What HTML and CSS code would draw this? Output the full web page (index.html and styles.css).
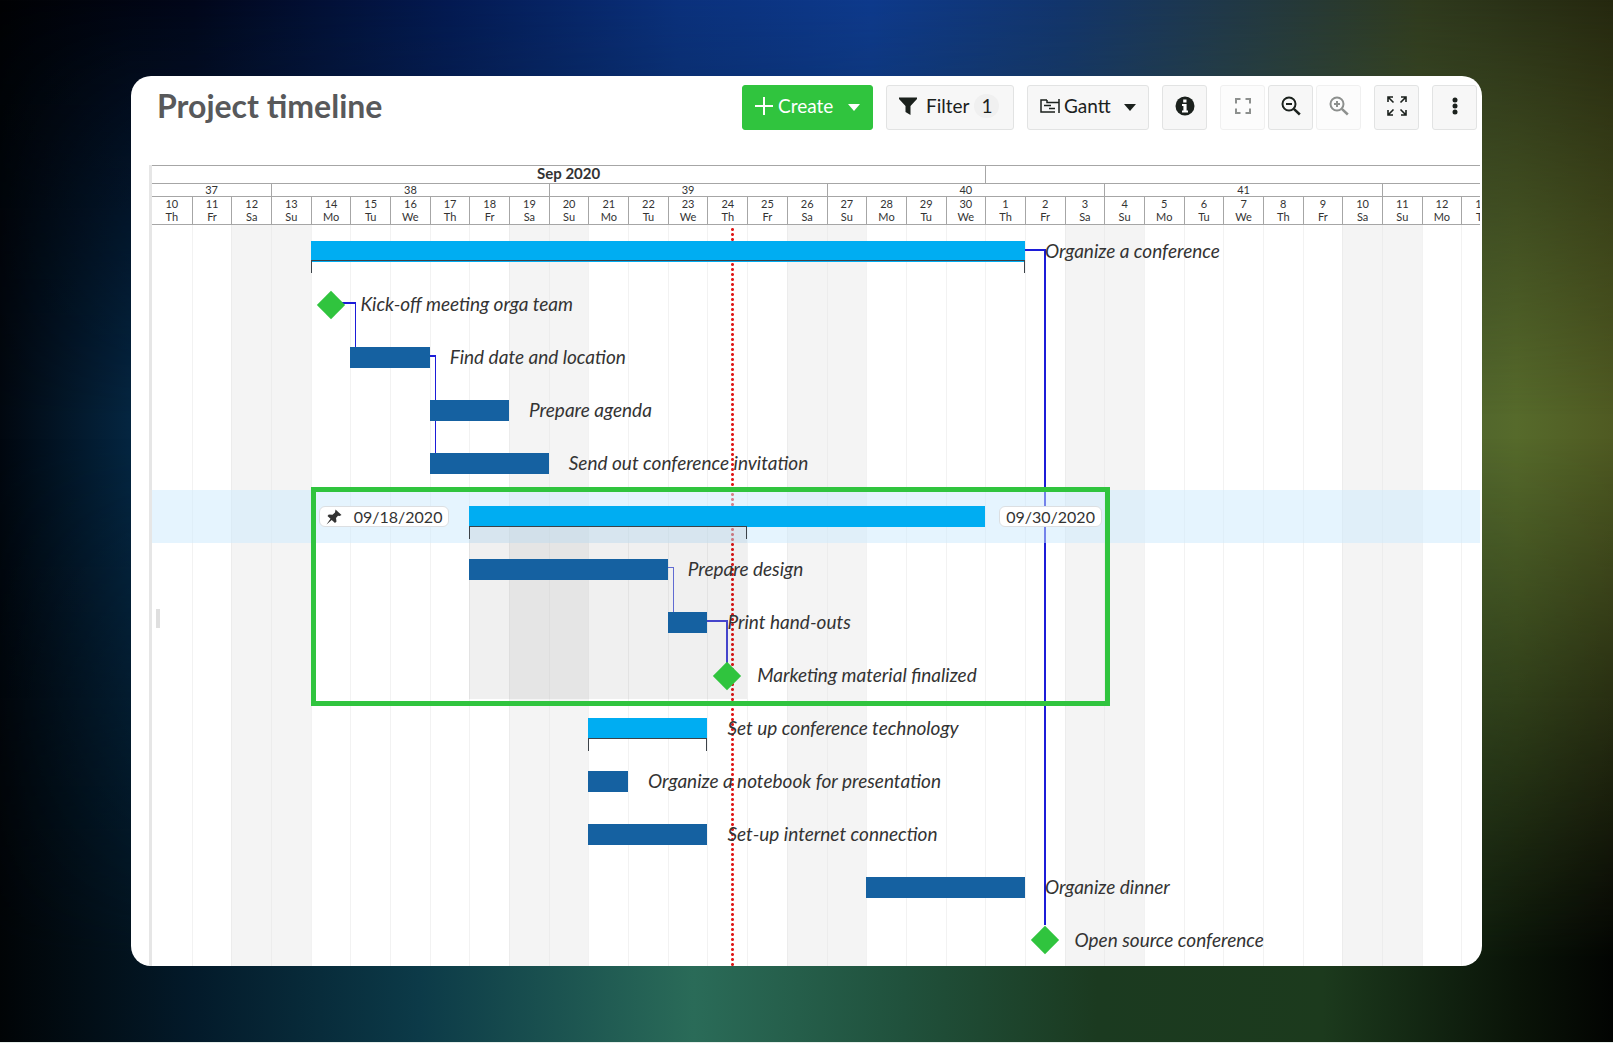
FILE: index.html
```html
<!DOCTYPE html>
<html lang="en">
<head>
<meta charset="utf-8">
<title>Project timeline</title>
<link rel="stylesheet" href="styles.css">
</head>
<body>
<main class="panel">
  <header class="toolbar">
    <h1 class="title">Project timeline</h1>
    <div class="actions">
      <button class="btn btn-create" type="button">
        <svg width="18" height="18" viewBox="0 0 18 18" fill="none" stroke="currentColor" stroke-width="2"><path d="M9 0v18M0 9h18"/></svg>
        <span>Create</span>
        <svg class="caret" width="12" height="7" viewBox="0 0 12 7" fill="currentColor"><path d="M0 0h12L6 7z"/></svg>
      </button>
      <button class="btn btn-filter" type="button">
        <svg width="18" height="18" viewBox="0 0 18 18" fill="currentColor"><path d="M0 0.500h18v1.500L11.500 9v9L6.500 15V9L0 2z"/></svg>
        <span>Filter</span>
        <span class="count">1</span>
      </button>
      <button class="btn btn-gantt" type="button">
        <svg width="20" height="14" viewBox="0 0 20 14" fill="none" stroke="currentColor" stroke-width="1.500"><path d="M7 1H1v12h14M19 0v14M7 1v2.500h12M4 6.500h7M9 9.500h6"/></svg>
        <span>Gantt</span>
        <svg class="caret" width="12" height="7" viewBox="0 0 12 7" fill="currentColor"><path d="M0 0h12L6 7z"/></svg>
      </button>
      <button class="btn btn-icon" type="button" aria-label="Details">
        <svg width="20" height="20" viewBox="0 0 20 20"><circle cx="10" cy="10" r="9.500" fill="#1b211d"/><path d="M8.200 3.500h3.300v3H8.200zM7 8h4.600v6.500H13v2H7v-2h1.400V10H7z" fill="#fff"/></svg>
      </button>
      <div class="group">
        <button class="btn btn-icon" type="button" aria-label="Zoom to fit" disabled>
          <svg width="16" height="16" viewBox="0 0 16 16" fill="none" stroke="currentColor" stroke-width="2"><path d="M1 5.500V1h4.500M10.500 1H15v4.500M15 10.500V15h-4.500M5.500 15H1v-4.500"/></svg>
        </button>
        <button class="btn btn-icon" type="button" aria-label="Zoom out">
          <svg width="20" height="20" viewBox="0 0 20 20" fill="none" stroke="currentColor" stroke-width="2"><circle cx="8" cy="8" r="6.500"/><path d="M5 8h6"/><path d="M12.800 12.800l6 5.700" stroke-width="2.500"/></svg>
        </button>
        <button class="btn btn-icon" type="button" aria-label="Zoom in" disabled>
          <svg width="20" height="20" viewBox="0 0 20 20" fill="none" stroke="currentColor" stroke-width="2"><circle cx="8" cy="8" r="6.500"/><path d="M5 8h6M8 5v6"/><path d="M12.800 12.800l6 5.700" stroke-width="2.500"/></svg>
        </button>
      </div>
      <button class="btn btn-icon" type="button" aria-label="Full screen">
        <svg width="20" height="20" viewBox="0 0 20 20" fill="none" stroke="currentColor" stroke-width="1.600"><path d="M1 6V1h5M1 1l5.500 5.500M14 1h5v5M19 1l-5.500 5.500M1 14v5h5M1 19l5.500-5.500M19 14v5h-5M19 19l-5.500-5.500"/></svg>
      </button>
      <button class="btn btn-icon" type="button" aria-label="More">
        <svg width="6" height="18" viewBox="0 0 6 18" fill="currentColor"><circle cx="3" cy="3" r="2.500"/><circle cx="3" cy="9" r="2.500"/><circle cx="3" cy="15" r="2.500"/></svg>
      </button>
    </div>
  </header>

  <section class="chart" aria-label="Gantt chart">
    <div class="timeline">
      <div class="scale months">
        <div style="grid-column: 1 / 22">Sep 2020</div><div style="grid-column: 22 / 35"></div>
      </div>
      <div class="scale weeks">
        <div style="grid-column: 1 / 4">37</div><div style="grid-column: 4 / 11">38</div><div style="grid-column: 11 / 18">39</div><div style="grid-column: 18 / 25">40</div><div style="grid-column: 25 / 32">41</div><div style="grid-column: 32 / 35"></div>
      </div>
      <div class="scale days">
        <div>10<br>Th</div><div>11<br>Fr</div><div>12<br>Sa</div><div>13<br>Su</div><div>14<br>Mo</div><div>15<br>Tu</div><div>16<br>We</div><div>17<br>Th</div><div>18<br>Fr</div><div>19<br>Sa</div><div>20<br>Su</div><div>21<br>Mo</div><div>22<br>Tu</div><div>23<br>We</div><div>24<br>Th</div><div>25<br>Fr</div><div>26<br>Sa</div><div>27<br>Su</div><div>28<br>Mo</div><div>29<br>Tu</div><div>30<br>We</div><div>1<br>Th</div><div>2<br>Fr</div><div>3<br>Sa</div><div>4<br>Su</div><div>5<br>Mo</div><div>6<br>Tu</div><div>7<br>We</div><div>8<br>Th</div><div>9<br>Fr</div><div>10<br>Sa</div><div>11<br>Su</div><div>12<br>Mo</div><div>13<br>Tu</div>
      </div>

      <div class="plot">
        <div class="columns">
          <i></i><i></i><i></i><i></i><i></i><i></i><i></i><i></i><i></i><i></i><i></i><i></i><i></i><i></i><i></i><i></i><i></i><i></i><i></i><i></i><i></i><i></i><i></i><i></i><i></i><i></i><i></i><i></i><i></i><i></i><i></i><i></i><i></i><i></i>
        </div>

        <div class="today" style="grid-column: 15"></div>

        <div class="link link-long" style="grid-row: 1 / 15; grid-column: 23"></div>
        <div class="link link-start" style="grid-row: 2 / 4; grid-column: 6"></div>
        <div class="link link-double" style="grid-row: 3 / 6; grid-column: 8"></div>
        <div class="link link-soft" style="grid-row: 7 / 9; grid-column: 14"></div>
        <div class="link link-half" style="grid-row: 8 / 10; grid-column: 15"></div>

        <div class="band" style="grid-row: 6"></div>
        <div class="span" style="grid-row: 6 / 10; grid-column: 9 / 16"></div>

        <div class="bar parent" style="grid-row: 1; grid-column: 5 / 23"></div>
        <div class="bracket inset" style="grid-row: 1; grid-column: 5 / 23"></div>
        <div class="label" style="grid-row: 1; grid-column: 23">Organize a conference</div>

        <div class="milestone" style="grid-row: 2; grid-column: 5"></div>
        <div class="label after-milestone" style="grid-row: 2; grid-column: 6">Kick-off meeting orga team</div>

        <div class="bar" style="grid-row: 3; grid-column: 6 / 8"></div>
        <div class="label" style="grid-row: 3; grid-column: 8">Find date and location</div>

        <div class="bar" style="grid-row: 4; grid-column: 8 / 10"></div>
        <div class="label" style="grid-row: 4; grid-column: 10">Prepare agenda</div>

        <div class="bar" style="grid-row: 5; grid-column: 8 / 11"></div>
        <div class="label" style="grid-row: 5; grid-column: 11">Send out conference invitation</div>

        <div class="date date-start" style="grid-row: 6; grid-column: 1 / 9">
          <svg width="16" height="16" viewBox="0 0 16 16" fill="currentColor"><path d="M9.500 0.500l6 5.500-2 1-1.500-.3-2 2.300.5 3.500-1.500 1.500-3.300-3L0.500 15.500 4.500 9.800 1.500 7l1.300-1.500 3.700.3L9 3.500z"/></svg>
          <span>09/18/2020</span>
        </div>
        <div class="bar parent" style="grid-row: 6; grid-column: 9 / 22"></div>
        <div class="bracket" style="grid-row: 6; grid-column: 9 / 16"></div>
        <div class="date date-end" style="grid-row: 6; grid-column: 22 / 26"><span>09/30/2020</span></div>

        <div class="bar" style="grid-row: 7; grid-column: 9 / 14"></div>
        <div class="label" style="grid-row: 7; grid-column: 14">Prepare design</div>

        <div class="bar" style="grid-row: 8; grid-column: 14 / 15"></div>
        <div class="label" style="grid-row: 8; grid-column: 15">Print hand-outs</div>

        <div class="milestone" style="grid-row: 9; grid-column: 15"></div>
        <div class="label after-milestone" style="grid-row: 9; grid-column: 16">Marketing material finalized</div>

        <div class="bar parent" style="grid-row: 10; grid-column: 12 / 15"></div>
        <div class="bracket" style="grid-row: 10; grid-column: 12 / 15"></div>
        <div class="label" style="grid-row: 10; grid-column: 15">Set up conference technology</div>

        <div class="bar" style="grid-row: 11; grid-column: 12 / 13"></div>
        <div class="label" style="grid-row: 11; grid-column: 13">Organize a notebook for presentation</div>

        <div class="bar" style="grid-row: 12; grid-column: 12 / 15"></div>
        <div class="label" style="grid-row: 12; grid-column: 15">Set-up internet connection</div>

        <div class="bar" style="grid-row: 13; grid-column: 19 / 23"></div>
        <div class="label" style="grid-row: 13; grid-column: 23">Organize dinner</div>

        <div class="milestone" style="grid-row: 14; grid-column: 23"></div>
        <div class="label after-milestone" style="grid-row: 14; grid-column: 24">Open source conference</div>

        <div class="frame" style="grid-row: 6 / 10; grid-column: 5 / 25"></div>
        <div class="handle"></div>
      </div>
    </div>
  </section>
</main>
</body>
</html>
```
FILE: styles.css
```css
* { box-sizing: border-box; }

:root {
  --green: #30c43e;
  --sky: #00adf2;
  --blue: #1561a1;
  --link: #1c1cd8;
  --line: #a6a6a6;
}

body {
  position: relative;
  z-index: 0;
  margin: 0;
  padding: 76px 131px;
  border-bottom: 1px solid #e6eeea;
  font-family: Lato, "Liberation Sans", sans-serif;
  color: #333;
  background: linear-gradient(90deg, #010204 0%, #02071a 12%, #041a52 28%, #0b317c 42%, #0e3a8c 54%, #12356c 66%, #203848 76%, #2f3a1e 88%, #25280f 100%) #01040a;
}

/* Two more colour bands fade in down the page: the sides, then the bottom edge. */
body::before,
body::after {
  content: "";
  position: absolute;
  inset: 0;
  z-index: -1;
}
body::before {
  background: linear-gradient(90deg, #01070f 0%, #042540 8%, #06284a 50%, #566a2b 94%, #4f5a22 100%);
  mask-image: linear-gradient(transparent 0%, #000 40%);
}
body::after {
  background: linear-gradient(90deg, #010406 0%, #031a2a 12%, #0c3a48 26%, #2a6b58 43%, #20513c 56%, #1b3a20 68%, #1c3a1d 82%, #0a1408 94%, #020402 100%);
  mask-image: linear-gradient(transparent 42%, #000 92%);
}

.panel {
  overflow: hidden;
  border-radius: 20px;
  background: #fff;
}

.toolbar {
  display: flex;
  justify-content: space-between;
  align-items: flex-start;
  padding: 9px 5px 35px 26px;
}

.title {
  margin: 0;
  font-size: 32px;
  line-height: 42px;
  font-weight: 700;
  color: #58595b;
}

.actions { display: flex; gap: 13px; }
.group { display: flex; gap: 3px; }

.btn {
  display: flex;
  align-items: center;
  height: 45px;
  padding: 0 12px 3px;
  border: 1px solid #e2e3e3;
  border-radius: 3px;
  background: #f7f7f7;
  color: #1b211d;
  font: 19px/24px Lato, "Liberation Sans", sans-serif;
  white-space: nowrap;
}
.btn-icon { justify-content: center; width: 45px; padding: 0 0 3px; }
.btn:disabled { background: #fcfcfc; border-color: #f0f0f0; color: #8d908e; }
.btn-create { gap: 5px; width: 131px; border-color: var(--green); background: var(--green); color: #fff; }
.btn-filter { gap: 9px; width: 128px; }
.btn-gantt { gap: 4px; width: 122px; }
.caret { margin: 2px 0 0 auto; }
.count {
  width: 25px;
  margin-left: -4px;
  border-radius: 12px;
  background: #f0f0f0;
  text-align: center;
}

.chart {
  overflow: hidden;
  margin: 0 2px 0 18px;
  border-left: 3px solid #e6e6e6;
}
/* The last day column runs past the right edge of the panel. */
.timeline { width: calc(100% + 21px); border-top: 1px solid var(--line); }

.scale,
.columns {
  display: grid;
  grid-template-columns: repeat(34, minmax(0, 1fr));
}
.scale {
  border-bottom: 1px solid var(--line);
  font-size: 11px;
  text-align: center;
}
.scale > div { border-left: 1px solid var(--line); }
.scale > div:first-child { border-left: 0; }
.months { height: 18px; font-size: 15px; line-height: 15px; font-weight: 700; }
.weeks { height: 13px; line-height: 11px; }
.days { height: 28px; line-height: 13px; }

.plot {
  display: grid;
  grid-template-columns: repeat(34, minmax(0, 1fr));
  grid-template-rows: repeat(13, 53px) 52px;
}
.columns { grid-area: 1 / 1 / -1 / -1; }
.columns i { border-left: 1px solid #f2f2f2; }
.columns i:first-child { border-left: 0; }
.columns i:nth-child(7n + 3),
.columns i:nth-child(7n + 4) { background: #f4f4f4; border-color: #ececec; }

.today {
  grid-row: 1 / -1;
  width: 3px;
  margin: 2px 0 0 24px;
  background: radial-gradient(circle at 50% 50%, #e01b1b 1px, transparent 2px) 0 0 / 3px 5px;
}

.link {
  width: 6px;
  height: 45px;
  margin-top: 24px;
  border: solid var(--link);
  border-width: 2px 1px 0 0;
}
.link-long { width: calc(50% + 1px); height: 676px; border-width: 2px 2px 0 0; }
.link-start { width: 16px; margin-left: -10px; }
.link-double { height: 98px; }
.link-soft { border-color: #6672e0; border-top-width: 1px; }
.link-half { width: calc(50% + 1px); border-width: 2px 2px 0 0; border-color: #4a4ad8; }

.band { grid-column: 1 / -1; background: rgba(204, 233, 253, 0.5); }
.span { margin: 37px 0 3px; background: rgba(0, 0, 0, 0.06); }

.bar { height: 21px; margin-top: 16px; background: var(--blue); }
.parent { background: var(--sky); }
.bracket { height: 13px; margin-top: 36px; border: 1px solid #3c4248; border-bottom: 0; }
.inset { margin-top: 35px; }

.milestone {
  place-self: center;
  width: 20px;
  height: 20px;
  background: var(--green);
  transform: rotate(45deg);
}

.label {
  padding-left: 20px;
  font-size: 19px;
  line-height: 51px;
  font-style: italic;
  white-space: nowrap;
}
.after-milestone { padding-left: 10px; }

.date {
  display: flex;
  align-items: center;
  height: 21px;
  margin-top: 16px;
  padding: 0 6px;
  border: 1px solid #dcdfe2;
  border-radius: 6px;
  background: #fff;
  font-size: 16px;
}
.date-start { justify-self: end; gap: 12px; margin-right: 20px; }
.date-end { justify-self: start; margin-left: 14px; }

.frame { margin: -3px -6px -4px 0; border: 5px solid var(--green); }

.handle {
  grid-area: 8 / 1;
  width: 4px;
  height: 19px;
  margin: 13px 0 0 4px;
  background: #dfdfdf;
}
```
